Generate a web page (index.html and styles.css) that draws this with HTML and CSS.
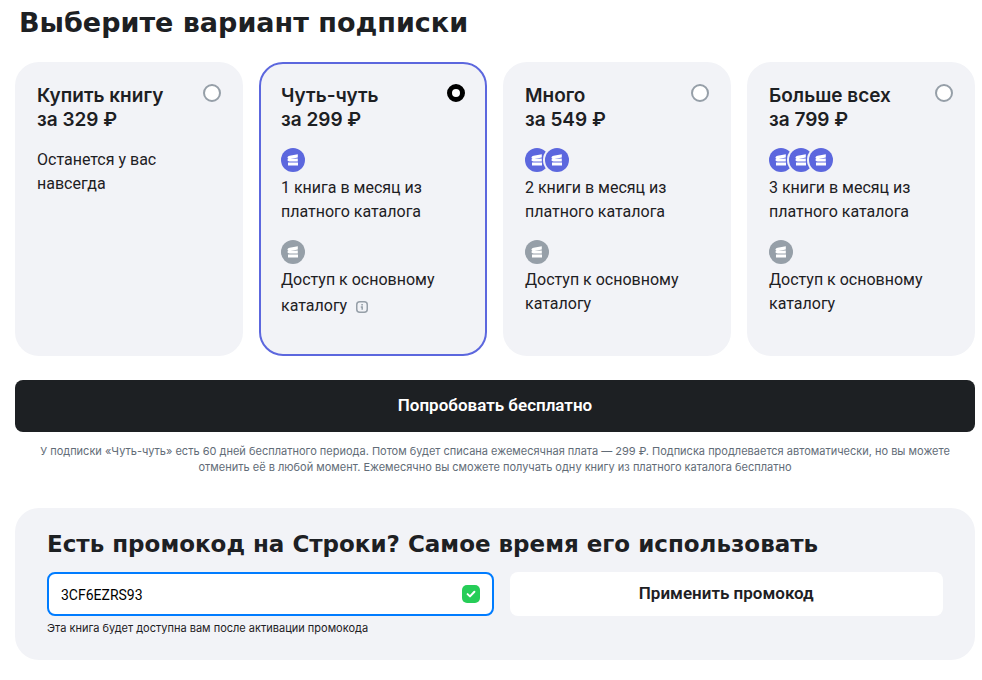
FILE: index.html
```html
<!DOCTYPE html>
<html lang="ru">
<head>
    <meta charset="UTF-8">
    <meta name="viewport" content="width=device-width, initial-scale=1.0">
    <title>Строки — подписка</title>
    <link rel="stylesheet" href="styles.css">
</head>
<body>
    <svg class="sprite" aria-hidden="true">
        <symbol id="books" viewBox="0 0 24 24">
            <path d="M8.6 7.8 16.8 6.2V9.4L9.4 10.9 16.8 10.6V13.5H8.6Q6.4 13.3 6.4 12 6.5 11.2 7.4 10.8 6.3 10.4 6.5 9.2 6.9 8.1 8.6 7.8ZM7 14.5H17V17.6H7Z" fill="#fff"/>
        </symbol>
    </svg>

    <main class="page">
        <form>
            <h1>Выберите вариант подписки</h1>

            <div class="plans">
                <label class="plan">
                    <span class="plan-head">
                        <span class="plan-title">Купить книгу<br>за 329 ₽</span>
                        <input type="radio" name="plan" value="book">
                    </span>
                    <span class="plan-text">Останется у вас навсегда</span>
                </label>

                <label class="plan">
                    <span class="plan-head">
                        <span class="plan-title">Чуть-чуть<br>за 299 ₽</span>
                        <input type="radio" name="plan" value="s" checked>
                    </span>
                    <span class="coins">
                        <svg class="coin"><use href="#books"/></svg>
                    </span>
                    <span class="plan-text">1 книга в месяц из платного каталога</span>
                    <span class="coins">
                        <svg class="coin coin-gray"><use href="#books"/></svg>
                    </span>
                    <span class="plan-text">Доступ к основному каталогу
                        <svg class="info" viewBox="0 0 16 16" fill="none" stroke="#969fa8">
                            <rect x="2.75" y="2.75" width="10.5" height="10.5" rx="3" stroke-width="1.5"/>
                            <path d="M7.3 5.8H8.9M6.8 8H8.2V10.8" stroke-width="1.5"/>
                        </svg>
                    </span>
                </label>

                <label class="plan">
                    <span class="plan-head">
                        <span class="plan-title">Много<br>за 549 ₽</span>
                        <input type="radio" name="plan" value="m">
                    </span>
                    <span class="coins">
                        <svg class="coin"><use href="#books"/></svg>
                        <svg class="coin"><use href="#books"/></svg>
                    </span>
                    <span class="plan-text">2 книги в месяц из платного каталога</span>
                    <span class="coins">
                        <svg class="coin coin-gray"><use href="#books"/></svg>
                    </span>
                    <span class="plan-text">Доступ к основному каталогу</span>
                </label>

                <label class="plan">
                    <span class="plan-head">
                        <span class="plan-title">Больше всех<br>за 799 ₽</span>
                        <input type="radio" name="plan" value="l">
                    </span>
                    <span class="coins">
                        <svg class="coin"><use href="#books"/></svg>
                        <svg class="coin"><use href="#books"/></svg>
                        <svg class="coin"><use href="#books"/></svg>
                    </span>
                    <span class="plan-text">3 книги в месяц из платного каталога</span>
                    <span class="coins">
                        <svg class="coin coin-gray"><use href="#books"/></svg>
                    </span>
                    <span class="plan-text">Доступ к основному каталогу</span>
                </label>
            </div>

            <button type="button" class="btn btn-dark">Попробовать бесплатно</button>
            <p class="note">У подписки «Чуть-чуть» есть 60 дней бесплатного периода. Потом будет списана ежемесячная плата — 299 ₽. Подписка продлевается автоматически, но вы можете отменить её в любой момент. Ежемесячно вы сможете получать одну книгу из платного каталога бесплатно</p>
        </form>

        <form class="promo">
            <h2><label for="promocode">Есть промокод на Строки? Самое время его использовать</label></h2>
            <div class="promo-row">
                <div class="field">
                    <input type="text" id="promocode" value="3CF6EZRS93" aria-describedby="promo-hint">
                    <svg class="check" viewBox="0 0 18 18">
                        <rect width="18" height="18" rx="5" fill="#26cd58"/>
                        <path d="M5.6 9.1 8 11.4 12.4 6.8" fill="none" stroke="#fff" stroke-width="2" stroke-linecap="round" stroke-linejoin="round"/>
                    </svg>
                </div>
                <button type="button" class="btn btn-white">Применить промокод</button>
            </div>
            <p class="hint" id="promo-hint">Эта книга будет доступна вам после активации промокода</p>
        </form>
    </main>
</body>
</html>
```
FILE: styles.css
```css
* {
    box-sizing: border-box;
}

body {
    margin: 0;
    background-color: #fff;
    color: #1d2023;
    font-family: Roboto, sans-serif;
    font-size: 16px;
    line-height: 24px;
}

.sprite {
    display: none;
}

.page {
    padding: 8px 7px 20px 15px;
}

h1,
h2 {
    margin: 0;
    font-family: "DejaVu Sans", sans-serif;
    font-weight: bold;
}

h1 {
    padding-left: 4px;
    margin-bottom: 24px;
    font-size: 27px;
    line-height: 30px;
}

h2 {
    margin-bottom: 16px;
    font-size: 23px;
    line-height: 24px;
}

.plans {
    display: grid;
    grid-template-columns: repeat(4, 1fr);
    gap: 16px;
    margin-bottom: 24px;
}

.plan {
    display: flex;
    flex-direction: column;
    min-height: 294px;
    padding: 20px;
    border: 2px solid #f2f3f7;
    border-radius: 24px;
    background-color: #f2f3f7;
    cursor: pointer;
}

.plan:has(input:checked) {
    border-color: #5c67de;
}

.plan-head {
    display: flex;
    justify-content: space-between;
    align-items: flex-start;
    margin-bottom: 16px;
}

.plan-title {
    font-family: Inter, sans-serif;
    font-size: 19px;
    font-weight: 600;
}

.plan input {
    appearance: none;
    flex: none;
    width: 18px;
    height: 18px;
    margin: 0;
    border: 2px solid #969fa8;
    border-radius: 50%;
    background-color: #fff;
}

.plan input:checked {
    border: 5px solid #000;
}

.coins {
    display: flex;
    margin-bottom: 4px;
}

.coin {
    width: 24px;
    height: 24px;
    border-radius: 50%;
    background-color: #5c67de;
}

.coin + .coin {
    margin-left: -4px;
    box-shadow: 0 0 0 2px #f2f3f7;
}

.coin-gray {
    background-color: #969fa8;
}

.plan-text {
    margin-bottom: 12px;
}

.plan-text + .coins {
    margin-top: 4px;
}

.info {
    width: 16px;
    height: 16px;
    margin-top: 7px;
    margin-left: 3px;
    vertical-align: -4px;
}

.btn {
    display: block;
    width: 100%;
    padding: 0 0 2px;
    border: none;
    border-radius: 8px;
    font-family: Roboto, sans-serif;
    font-size: 17px;
    font-weight: 600;
    cursor: pointer;
}

.btn-dark {
    height: 52px;
    background-color: #1d2023;
    color: #fff;
}

.btn-white {
    height: 44px;
    background-color: #fff;
    color: #1d2023;
}

.note {
    margin: 11px 0 33px;
    padding: 0 16px;
    color: #626c77;
    font-family: Inter, sans-serif;
    font-size: 11px;
    line-height: 16px;
    text-align: center;
}

.promo {
    padding: 24px 32px;
    border-radius: 24px;
    background-color: #f2f3f7;
}

.promo-row {
    display: grid;
    grid-template-columns: 34fr 33fr;
    gap: 16px;
}

.field {
    position: relative;
}

.field input {
    width: 100%;
    height: 44px;
    padding: 2px 44px 0 12px;
    border: 2px solid #007cff;
    border-radius: 8px;
    outline: none;
    background-color: #fff;
    color: #000;
    font-family: Roboto, sans-serif;
    font-size: 14px;
}

.check {
    position: absolute;
    top: 13px;
    right: 14px;
    width: 18px;
    height: 18px;
}

.hint {
    margin: 4px 0 0;
    font-family: Inter, sans-serif;
    font-size: 11px;
    line-height: 16px;
}
```
